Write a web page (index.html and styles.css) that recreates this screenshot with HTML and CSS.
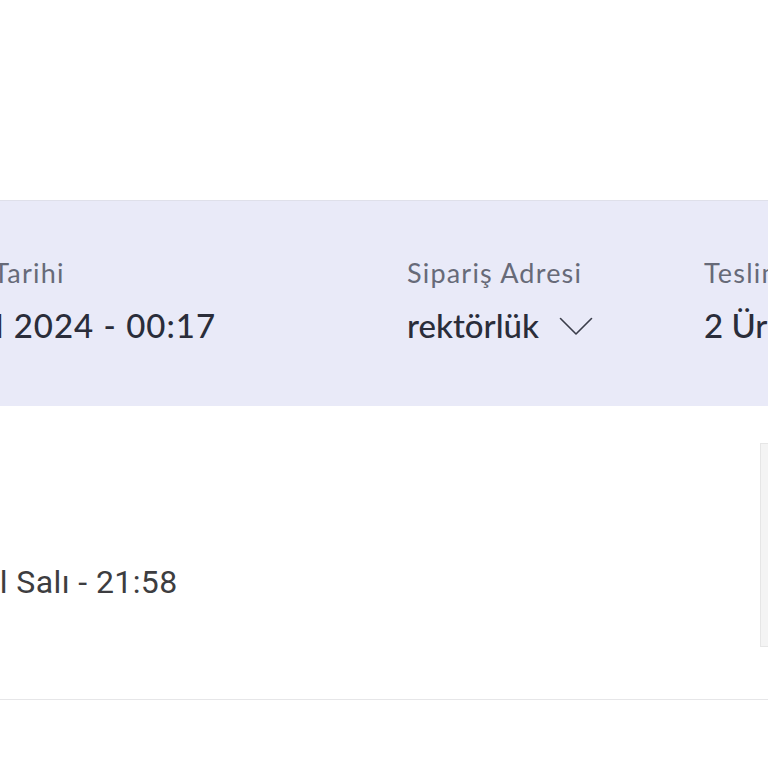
FILE: index.html
```html
<!DOCTYPE html>
<html lang="tr">
<head>
<meta charset="utf-8">
<title>Sipariş Detayı</title>
<link rel="stylesheet" href="styles.css">
</head>
<body>
<main class="page">
  <section class="order-card">
    <div class="summary">
      <div class="field field-date">
        <span class="label">Sipariş Tarihi</span>
        <span class="value value-date">17 Eylül 2024 - 00:17</span>
      </div>
      <div class="field field-address">
        <span class="label">Sipariş Adresi</span>
        <span class="value value-select">rektörlük
          <svg class="chevron" width="34" height="19" viewBox="0 0 34 19" aria-hidden="true"><path d="M1.5 1.5 L17 17 L32.5 1.5" fill="none" stroke="#3a3d4a" stroke-width="1.6" stroke-linejoin="round" stroke-linecap="round"/></svg>
        </span>
      </div>
      <div class="field field-delivery">
        <span class="label">Teslimat Bilgileri</span>
        <span class="value">2 Ürün Teslim Edildi</span>
      </div>
    </div>
    <div class="shipment">
      <div class="shipment-info">
        <span class="delivery-time">Tahmini Teslim: 17 Eylül Salı - 21:58</span>
      </div>
      <div class="thumbs">
        <div class="thumb"></div>
      </div>
    </div>
  </section>
</main>
</body>
</html>
```
FILE: styles.css
```css
html, body {
  margin: 0;
  padding: 0;
  background: #ffffff;
  overflow: hidden;
}

.page {
  padding-top: 200px;
  width: 768px;
  overflow: hidden;
}

.order-card {
  display: flex;
  flex-direction: column;
}

.summary {
  display: flex;
  align-items: flex-start;
  box-sizing: border-box;
  height: 206px;
  padding-top: 56px;
  border-top: 1px solid #dfe0ea;
  background: #e9eaf8;
  font-family: "Lato", "Open Sans", sans-serif;
}

.field {
  display: flex;
  flex-direction: column;
  flex: none;
  white-space: nowrap;
}

.field-date {
  margin-left: -100px;
  width: 507px;
}

.field-address {
  width: 297px;
}

.label {
  font-size: 27px;
  line-height: 32px;
  color: #676a78;
  letter-spacing: 1.2px;
}

.value {
  margin-top: 17px;
  font-size: 33px;
  line-height: 38px;
  font-weight: 500;
  color: #2a2d3a;
  letter-spacing: 0;
}

.value-date {
  margin-left: -20px;
  letter-spacing: 1px;
}

.value-select {
  display: flex;
  align-items: center;
  gap: 20px;
}

.chevron {
  display: block;
  margin-top: 2px;
}

.shipment {
  display: flex;
  justify-content: space-between;
  align-items: flex-start;
  padding: 37px 0 52px;
  border-bottom: 1px solid #e6e6e8;
}

.shipment-info {
  padding-top: 120px;
  margin-left: -343px;
}

.delivery-time {
  font-family: "Roboto", sans-serif;
  font-size: 32px;
  line-height: 38px;
  color: #3d3d40;
  letter-spacing: 0.4px;
  white-space: nowrap;
}

.thumbs {
  display: flex;
  margin-right: -60px;
}

.thumb {
  width: 66px;
  height: 202px;
  background: #f4f4f4;
  border: 1px solid #e6e6e6;
}
```
